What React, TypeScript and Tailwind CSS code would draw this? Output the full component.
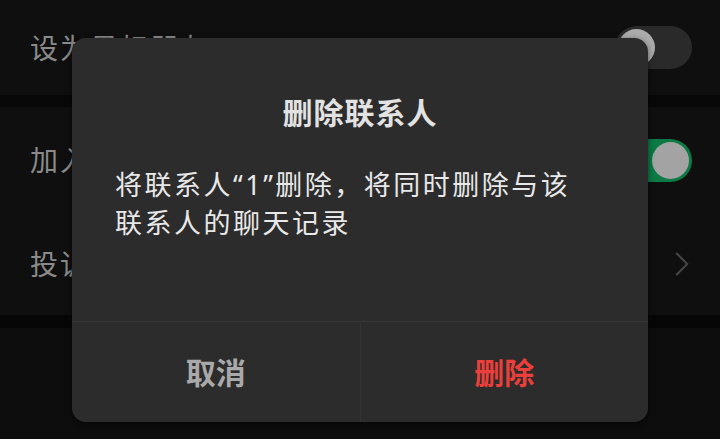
import { ChevronRight } from 'lucide-react';

const font = 'font-["Noto_Sans","Noto_Sans_CJK_SC",sans-serif]';

function Toggle({ on }: { on: boolean }) {
  return (
    <div
      className={`flex h-[43px] w-[77px] items-center rounded-full p-[3px] ${
        on ? 'justify-end bg-[#0b7a45]' : 'justify-start bg-[#2a2a2a]'
      }`}
    >
      <div className={`h-[37px] w-[37px] rounded-full ${on ? 'bg-[#a3a3a3]' : 'bg-[#ababab]'}`} />
    </div>
  );
}

function Row({ label, height, children }: { label: string; height: string; children?: React.ReactNode }) {
  return (
    <div className={`flex items-center justify-between bg-[#0f0f0f] pl-[30px] pr-[28px] ${height}`}>
      <span className="text-[28px] tracking-[2px] text-[#8a8a8a]">{label}</span>
      {children}
    </div>
  );
}

export default function App() {
  return (
    <div className={`relative h-[439px] w-[720px] overflow-hidden bg-[#0d0d0d] ${font}`}>
      {/* settings list behind the dialog */}
      <div className="flex flex-col">
        <Row label="设为星标朋友" height="h-[95px]">
          <Toggle on={false} />
        </Row>
        <div className="h-[12px] bg-[#080808]" />
        <Row label="加入黑名单" height="h-[106px]">
          <Toggle on />
        </Row>
        <Row label="投诉" height="h-[102px]">
          <ChevronRight size={42} strokeWidth={1.2} className="mr-[-11px] text-[#454545]" />
        </Row>
        <div className="h-[13px] bg-[#060606]" />
      </div>

      {/* dialog */}
      <div className="absolute left-[72px] top-[38px] flex h-[384px] w-[576px] flex-col rounded-[14px] bg-[#2c2c2c] shadow-[0_2px_6px_rgba(0,0,0,0.5)]">
        <div className="pt-[55px] text-center text-[30px] font-bold leading-[40px] tracking-[1px] text-[#e2e2e2]">
          删除联系人
        </div>
        <p className="mt-[33px] px-[43px] text-[27px] leading-[38px] tracking-[2.5px] text-[#e8e8e8]">
          将联系人“1”删除，将同时删除与该
          <br />
          联系人的聊天记录
        </p>
        <div className="flex-1" />
        <div className="flex h-[101px] border-t border-[#363636]">
          <div className="flex flex-1 items-center justify-center text-[30px] font-bold text-[#a9a9a9]">
            取消
          </div>
          <div className="w-px bg-[#333333]" />
          <div className="flex flex-1 items-center justify-center text-[30px] font-bold text-[#ea3f3a]">
            删除
          </div>
        </div>
      </div>
    </div>
  );
}
